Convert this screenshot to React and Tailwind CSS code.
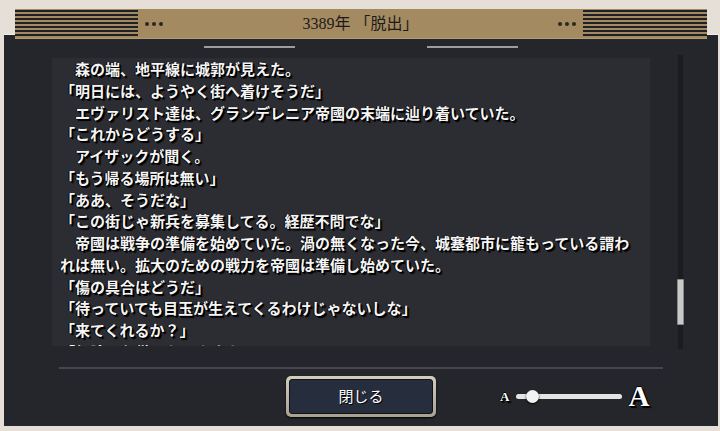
const lines = [
  "　森の端、地平線に城郭が見えた。",
  "「明日には、ようやく街へ着けそうだ」",
  "　エヴァリスト達は、グランデレニア帝國の末端に辿り着いていた。",
  "「これからどうする」",
  "　アイザックが聞く。",
  "「もう帰る場所は無い」",
  "「ああ、そうだな」",
  "「この街じゃ新兵を募集してる。経歴不問でな」",
  "　帝國は戦争の準備を始めていた。渦の無くなった今、城塞都市に籠もっている謂われは無い。拡大のための戦力を帝國は準備し始めていた。",
  "「傷の具合はどうだ」",
  "「待っていても目玉が生えてくるわけじゃないしな」",
  "「来てくれるか？」",
  "「無論、お供いたしますよ」",
];

const stripes =
  "h-[28px] bg-[repeating-linear-gradient(to_bottom,#1f2025_0px,#1f2025_2px,transparent_2px,transparent_4px)]";

function Dots() {
  return (
    <div className="flex gap-[3px]">
      <span className="w-[4px] h-[4px] rounded-full bg-[#2a2620]" />
      <span className="w-[4px] h-[4px] rounded-full bg-[#2a2620]" />
      <span className="w-[4px] h-[4px] rounded-full bg-[#2a2620]" />
    </div>
  );
}

function Header() {
  return (
    <div className="absolute top-[9px] left-[15px] w-[692px] h-[30px] bg-[#a38a61] flex items-center border-b border-[#b49c72]">
      <div className={`w-[123px] ${stripes}`} />
      <div className="ml-[7px]">
        <Dots />
      </div>
      <div className="flex-1 text-center text-[16px] text-[#1c1b19] font-['Liberation_Serif','Noto_Sans_CJK_JP',serif]">
        3389年 「脱出」
      </div>
      <div className="mr-[7px]">
        <Dots />
      </div>
      <div className={`w-[124px] ${stripes}`} />
    </div>
  );
}

function FontSlider() {
  const outline =
    "[text-shadow:1px_1px_0_#000,2px_2px_1px_#000,-1px_0_0_#000,0_-1px_0_#000]";
  return (
    <div className="flex items-center ml-[64px]">
      <span className={`text-[13px] font-bold text-white font-['Liberation_Serif',serif] ${outline}`}>
        A
      </span>
      <div className="relative ml-[7px] w-[106px] h-[5px] rounded-full bg-[#e4e4e4]">
        <span className="absolute left-[10px] top-[-4px] w-[13px] h-[13px] rounded-full bg-[#f2f2f2] shadow-[0_1px_2px_#000]" />
      </div>
      <span className={`ml-[6px] text-[29px] leading-none font-bold text-white font-['Liberation_Serif',serif] ${outline}`}>
        A
      </span>
    </div>
  );
}

export default function App() {
  return (
    <div className="relative w-[720px] h-[431px] bg-[#e5dfd8] overflow-hidden">
      <div className="ml-[4px] mr-[2px] mt-[34px] h-[392px] bg-[#25262b] border-t border-[#f3f0ec] flex flex-col">
        <div className="flex mt-[11px] h-[2px]">
          <div className="ml-[200px] w-[91px] bg-[#9d9d9f]" />
          <div className="ml-[132px] w-[91px] bg-[#9d9d9f]" />
        </div>

        <div className="flex items-start mt-[7px]">
          <div className="ml-[48px] mt-[3px] w-[598px] h-[288px] bg-[#2c2d33] overflow-hidden pl-[8px] pr-[10px]">
            <div className="text-[15px] leading-[21.75px] font-bold text-[#f5f5f5] font-['Noto_Sans_CJK_JP',sans-serif] [text-shadow:1px_1px_0_#000,2px_2px_1px_#000,-1px_0_0_#000]">
              {lines.map((l, i) => (
                <p key={i}>{l}</p>
              ))}
            </div>
          </div>
          <div className="relative ml-[28px] w-[5px] h-[294px] bg-[#1b1c20]">
            <span className="absolute left-[-1px] top-[224px] w-[7px] h-[46px] rounded-[1px] bg-[#c9c9c9] border border-[#8a8a8a]" />
          </div>
        </div>

        <div className="ml-[55px] mt-[18px] w-[604px] h-[2px] bg-[#45464f]" />

        <div className="flex items-center mt-[7px]">
          <div className="ml-[282px] w-[150px] h-[41px] p-[3px] rounded-[5px] bg-[linear-gradient(#d3cdbd,#a8a190)] shadow-[0_1px_2px_#000]">
            <div className="h-full rounded-[3px] border border-[#111318] bg-[#262d3c] flex items-center justify-center text-[15px] text-white font-['Noto_Sans_CJK_JP',sans-serif] [text-shadow:1px_1px_0_#000]">
              閉じる
            </div>
          </div>
          <FontSlider />
        </div>
      </div>
      <Header />
    </div>
  );
}
